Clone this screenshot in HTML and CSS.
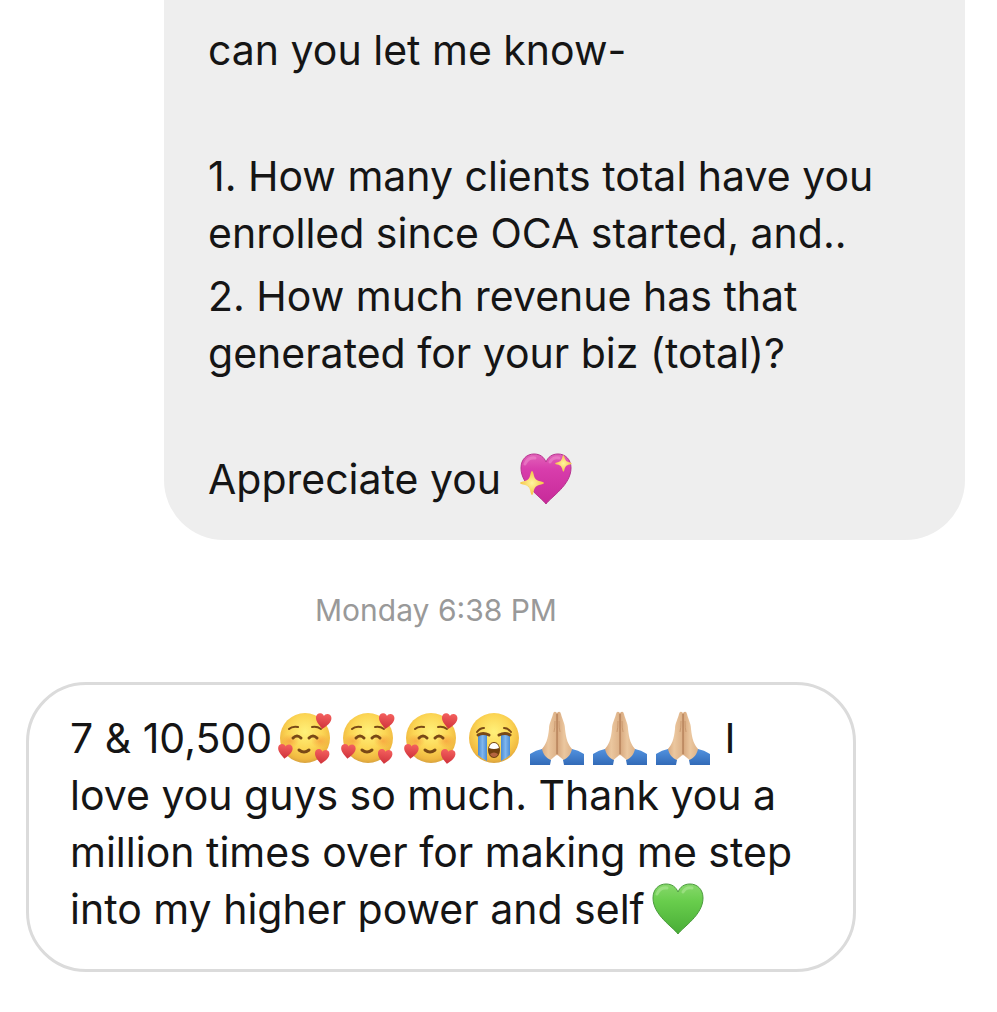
FILE: index.html
```html
<!DOCTYPE html>
<html lang="en">
<head>
  <meta charset="UTF-8" />
  <meta name="viewport" content="width=device-width, initial-scale=1.0"/>
  <title>Messages</title>
  <link rel="stylesheet" href="styles.css">
</head>
<body>
  <!-- emoji shapes, reused below -->
  <svg class="defs" width="0" height="0" aria-hidden="true">
    <defs>
      <radialGradient id="face" cx="50%" cy="38%" r="62%">
        <stop offset="0" stop-color="#fff17a"/>
        <stop offset="0.55" stop-color="#fcd655"/>
        <stop offset="0.88" stop-color="#f0b840"/>
        <stop offset="1" stop-color="#d8a23e"/>
      </radialGradient>
      <radialGradient id="blush">
        <stop offset="0" stop-color="#f48a35" stop-opacity="0.55"/>
        <stop offset="1" stop-color="#f48a35" stop-opacity="0"/>
      </radialGradient>
      <linearGradient id="red" x1="0" y1="0" x2="0" y2="1">
        <stop offset="0" stop-color="#f4605e"/>
        <stop offset="1" stop-color="#cf323b"/>
      </linearGradient>
      <linearGradient id="pink" x1="0" y1="0" x2="0" y2="1">
        <stop offset="0" stop-color="#e263b9"/>
        <stop offset="0.3" stop-color="#d83dac"/>
        <stop offset="1" stop-color="#c72a99"/>
      </linearGradient>
      <linearGradient id="green" x1="0" y1="0" x2="0" y2="1">
        <stop offset="0" stop-color="#87d86b"/>
        <stop offset="0.35" stop-color="#68cd4c"/>
        <stop offset="1" stop-color="#49ad37"/>
      </linearGradient>
      <radialGradient id="star">
        <stop offset="0" stop-color="#fff5a0"/>
        <stop offset="1" stop-color="#f5c444"/>
      </radialGradient>
      <linearGradient id="tear" x1="0" y1="0" x2="1" y2="0">
        <stop offset="0" stop-color="#4a8cd4"/>
        <stop offset="0.5" stop-color="#80b6ed"/>
        <stop offset="1" stop-color="#4a8cd4"/>
      </linearGradient>
      <linearGradient id="skin" x1="0" y1="0" x2="1" y2="0">
        <stop offset="0" stop-color="#d6a67c"/>
        <stop offset="0.45" stop-color="#ebc79f"/>
        <stop offset="1" stop-color="#dcb086"/>
      </linearGradient>
      <linearGradient id="sleeve" x1="0" y1="0" x2="0" y2="1">
        <stop offset="0" stop-color="#5292df"/>
        <stop offset="1" stop-color="#326ab7"/>
      </linearGradient>

      <path id="heart" d="M27 52C22 45 2 33 2 16C2 7 8 2 15 2C21 2 25 5 27 10C29 5 33 2 39 2C46 2 52 7 52 16C52 33 32 45 27 52Z"/>
      <path id="sparkle" d="M12 0Q13 0 14 5Q15 9 19 10Q24 11 24 12Q24 13 19 14Q15 15 14 19Q13 24 12 24Q11 24 10 19Q9 15 5 14Q0 13 0 12Q0 11 5 10Q9 9 10 5Q11 0 12 0Z"/>

      <symbol id="loving" viewBox="0 0 54 54">
        <circle cx="27" cy="27" r="25" fill="url(#face)"/>
        <ellipse cx="12" cy="30" rx="9" ry="7" fill="url(#blush)"/>
        <ellipse cx="42" cy="30" rx="9" ry="7" fill="url(#blush)"/>
        <g fill="none" stroke="#794916" stroke-linecap="round">
          <path d="M11 18Q14 15 20 16" stroke-width="2"/>
          <path d="M34 16Q39 15 43 18" stroke-width="2"/>
          <path d="M15 27Q19 23 23 27" stroke-width="3"/>
          <path d="M31 27Q35 23 39 27" stroke-width="3"/>
          <path d="M21 39Q26 43 31 39" stroke-width="3"/>
        </g>
        <use href="#heart" fill="url(#red)" transform="translate(38 1) rotate(7) scale(.31)"/>
        <use href="#heart" fill="url(#red)" transform="translate(0 32) rotate(5) scale(.29)"/>
        <use href="#heart" fill="url(#red)" transform="translate(37 37) rotate(7) scale(.29)"/>
      </symbol>

      <symbol id="crying" viewBox="0 0 54 54">
        <circle cx="27" cy="27" r="25" fill="url(#face)"/>
        <path d="M11 24H20V50Q14 47 11 44Z" fill="url(#tear)"/>
        <path d="M34 24H43V44Q40 47 34 50Z" fill="url(#tear)"/>
        <g fill="none" stroke="#794916" stroke-linecap="round">
          <path d="M10 21Q13 17 17 17" stroke-width="2"/>
          <path d="M37 17Q41 17 44 21" stroke-width="2"/>
          <path d="M11 24Q16 21 22 24" stroke-width="3"/>
          <path d="M32 24Q38 21 43 24" stroke-width="3"/>
        </g>
        <ellipse cx="27" cy="39" rx="6" ry="8" fill="#70400f"/>
        <path d="M22 37Q23 32 27 32Q31 32 32 37Q27 39 22 37Z" fill="#fff"/>
        <path d="M23 43Q27 40 31 43Q30 46 27 46Q24 46 23 43Z" fill="#b5653f"/>
      </symbol>

      <symbol id="hands" viewBox="0 0 54 54">
        <path d="M27 2Q24 -1 23 3C22 8 19 12 19 18C18 28 16 34 11 39L16 52Q21 49 24 46Q26 44 27 44Z" fill="url(#skin)"/>
        <path d="M27 2Q30 -1 31 3C32 8 35 12 35 18C36 28 38 34 43 39L38 52Q33 49 30 46Q28 44 27 44Z" fill="url(#skin)"/>
        <path d="M27 3V43" stroke="#a66e49" fill="none"/>
        <path d="M25 10Q25 17 24 21M29 10Q29 17 30 21" stroke="#cb9a70" fill="none"/>
        <path d="M0 43Q6 39 12 38C13 43 16 47 21 49L20 54H0Z" fill="url(#sleeve)"/>
        <path d="M54 43Q48 39 42 38C41 43 38 47 33 49L34 54H54Z" fill="url(#sleeve)"/>
      </symbol>

      <symbol id="sparkling-heart" viewBox="0 0 54 54">
        <use href="#heart" fill="url(#pink)" stroke="#b7348f"/>
        <path d="M6 12Q9 5 16 6M31 10Q34 5 40 6" stroke="#f295d0" stroke-width="3" stroke-linecap="round" fill="none" opacity=".5"/>
        <use href="#sparkle" fill="url(#star)" transform="translate(1 19)"/>
        <use href="#sparkle" fill="url(#star)" transform="translate(36 3) scale(.7)"/>
      </symbol>

      <symbol id="green-heart" viewBox="0 0 54 54">
        <use href="#heart" fill="url(#green)" stroke="#4b9b3d"/>
        <path d="M6 12Q9 5 16 6M32 10Q35 5 41 6" stroke="#b7eb9f" stroke-width="3" stroke-linecap="round" fill="none" opacity=".5"/>
      </symbol>
    </defs>
  </svg>

  <main class="chat">
    <div class="bubble sent">
      <p>can you let me know-</p>
      <p class="blank"></p>
      <p>1. How many clients total have you<br>enrolled since OCA started, and..</p>
      <p>2. How much revenue has that<br>generated for your biz (total)?</p>
      <p class="blank"></p>
      <p>Appreciate you <svg class="emoji" role="img" aria-label="sparkling heart"><use href="#sparkling-heart"/></svg></p>
    </div>

    <time class="timestamp">Monday 6:38 PM</time>

    <div class="bubble received">
      <p>7 &amp; 10,500<svg class="emoji" role="img" aria-label="smiling face with hearts"><use href="#loving"/></svg><svg class="emoji" role="img" aria-label="smiling face with hearts"><use href="#loving"/></svg><svg class="emoji" role="img" aria-label="smiling face with hearts"><use href="#loving"/></svg><svg class="emoji" role="img" aria-label="loudly crying face"><use href="#crying"/></svg><svg class="emoji" role="img" aria-label="folded hands"><use href="#hands"/></svg><svg class="emoji" role="img" aria-label="folded hands"><use href="#hands"/></svg><svg class="emoji" role="img" aria-label="folded hands"><use href="#hands"/></svg> I<br>love you guys so much. Thank you a<br>million times over for making me step<br>into my higher power and self<svg class="emoji" role="img" aria-label="green heart"><use href="#green-heart"/></svg></p>
    </div>
  </main>
</body>
</html>
```
FILE: styles.css
```css
body {
  margin: 0;
  background-color: #fff;
  color: #151515;
  font-family: Inter, 'Liberation Sans', sans-serif;
  font-size: 41px;
  line-height: 57px;
}

.defs {
  position: absolute;
}

.chat {
  display: flex;
  flex-direction: column;
  padding: 0 32px 40px 26px;
}

.bubble {
  box-sizing: border-box;
  white-space: nowrap;
}

.bubble p {
  margin: 0;
}

.sent {
  display: flex;
  flex-direction: column;
  gap: 6px;
  margin-left: 138px;
  padding: 22px 44px 32px;
  background-color: #eee;
  border-radius: 0 0 60px 60px;
}

.blank {
  height: 57px;
}

.timestamp {
  margin: 50px 0 52px 289px;
  color: #999;
  font-size: 30px;
  line-height: 40px;
}

.received {
  margin-right: 109px;
  padding: 25px 41px 31px;
  border: 3px solid #dbdbdb;
  border-radius: 60px;
}

.emoji {
  width: 54px;
  height: 54px;
  margin: 0 3px 0 6px;
  vertical-align: -12px;
}
```
